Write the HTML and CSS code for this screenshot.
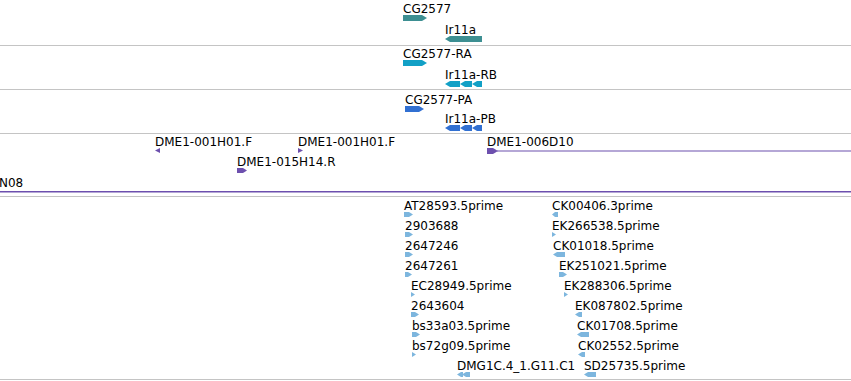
FILE: index.html
```html
<!DOCTYPE html>
<html lang="en">
<head>
  <meta charset="UTF-8" />
  <title>Track view</title>
  <link rel="stylesheet" href="styles.css">
</head>
<body>
  <div class="tracks">

    <!-- gene models -->
    <div class="track t-genes">
      <div class="feat" style="left:403px;top:2px">
        <div class="lbl">CG2577</div>
        <svg class="glyph" width="24" height="6"><polygon points="0,0 19,0 24,3 19,6 0,6"/></svg>
      </div>
      <div class="feat" style="left:445px;top:23px">
        <div class="lbl">Ir11a</div>
        <svg class="glyph" width="37" height="6"><polygon points="0,3 5,0 37,0 37,6 5,6"/></svg>
      </div>
    </div>

    <!-- transcripts -->
    <div class="track t-mrna">
      <div class="feat" style="left:403px;top:1px">
        <div class="lbl">CG2577-RA</div>
        <svg class="glyph" width="24" height="6"><polygon points="0,0 19,0 24,3 19,6 0,6"/></svg>
      </div>
      <div class="feat" style="left:445px;top:22px">
        <div class="lbl">Ir11a-RB</div>
        <svg class="glyph" width="37" height="6">
          <polygon points="0,3 5,0 15,0 15,6 5,6"/>
          <polygon points="15,3 20,0 27,0 27,6 20,6"/>
          <polygon points="27,3 32,0 37,0 37,6 32,6"/>
        </svg>
      </div>
    </div>

    <!-- polypeptides -->
    <div class="track t-pep">
      <div class="feat" style="left:405px;top:3px">
        <div class="lbl">CG2577-PA</div>
        <svg class="glyph" width="19" height="6"><polygon points="0,0 14,0 19,3 14,6 0,6"/></svg>
      </div>
      <div class="feat" style="left:445px;top:22px">
        <div class="lbl">Ir11a-PB</div>
        <svg class="glyph" width="37" height="6">
          <polygon points="0,3 5,0 15,0 15,6 5,6"/>
          <polygon points="15,3 20,0 27,0 27,6 20,6"/>
          <polygon points="27,3 32,0 37,0 37,6 32,6"/>
        </svg>
      </div>
    </div>

    <!-- BAC ends -->
    <div class="track t-bac">
      <div class="feat" style="left:155px;top:1px">
        <div class="lbl">DME1-001H01.F</div>
        <svg class="glyph" width="5" height="5"><polygon points="0,2.5 5,0 5,5"/></svg>
      </div>
      <div class="feat" style="left:298px;top:1px">
        <div class="lbl">DME1-001H01.F</div>
        <svg class="glyph" width="5" height="5"><polygon points="0,0 5,2.5 0,5"/></svg>
      </div>
      <div class="feat" style="left:487px;top:1px">
        <div class="lbl">DME1-006D10</div>
        <svg class="glyph" width="364" height="6">
          <polygon points="0,0 6,0 11,3 6,6 0,6"/>
          <rect x="10" y="2.5" width="354" height="1"/>
        </svg>
      </div>
      <div class="feat" style="left:237px;top:21px">
        <div class="lbl">DME1-015H14.R</div>
        <svg class="glyph" width="10" height="5"><polygon points="0,0 6,0 10,2.5 6,5 0,5"/></svg>
      </div>
      <div class="feat" style="left:-1px;top:42px">
        <div class="lbl">N08</div>
        <svg class="glyph" width="852" height="6"><rect x="0" y="2" width="852" height="1.5"/></svg>
      </div>
    </div>

    <!-- ESTs -->
    <div class="track t-est">
      <div class="feat" style="left:404px;top:2px">
        <div class="lbl">AT28593.5prime</div>
        <svg class="glyph" width="9" height="5"><polygon points="0,0 5,0 9,2.5 5,5 0,5"/></svg>
      </div>
      <div class="feat" style="left:552px;top:2px">
        <div class="lbl">CK00406.3prime</div>
        <svg class="glyph" width="6" height="5"><polygon points="0,2.5 3,0 6,0 6,5 3,5"/></svg>
      </div>

      <div class="feat" style="left:405px;top:22px">
        <div class="lbl">2903688</div>
        <svg class="glyph" width="8" height="5"><polygon points="0,0 4,0 8,2.5 4,5 0,5"/></svg>
      </div>
      <div class="feat" style="left:552px;top:22px">
        <div class="lbl">EK266538.5prime</div>
        <svg class="glyph" width="4" height="5"><polygon points="0,0 4,2.5 0,5"/></svg>
      </div>

      <div class="feat" style="left:405px;top:42px">
        <div class="lbl">2647246</div>
        <svg class="glyph" width="8" height="5"><polygon points="0,0 4,0 8,2.5 4,5 0,5"/></svg>
      </div>
      <div class="feat" style="left:553px;top:42px">
        <div class="lbl">CK01018.5prime</div>
        <svg class="glyph" width="12" height="5"><polygon points="0,2.5 4,0 12,0 12,5 4,5"/></svg>
      </div>

      <div class="feat" style="left:405px;top:62px">
        <div class="lbl">2647261</div>
        <svg class="glyph" width="7" height="5"><polygon points="0,0 3,0 7,2.5 3,5 0,5"/></svg>
      </div>
      <div class="feat" style="left:559px;top:62px">
        <div class="lbl">EK251021.5prime</div>
        <svg class="glyph" width="8" height="5"><polygon points="0,0 4,0 8,2.5 4,5 0,5"/></svg>
      </div>

      <div class="feat" style="left:411px;top:82px">
        <div class="lbl">EC28949.5prime</div>
        <svg class="glyph" width="4" height="5"><polygon points="0,0 4,2.5 0,5"/></svg>
      </div>
      <div class="feat" style="left:564px;top:82px">
        <div class="lbl">EK288306.5prime</div>
        <svg class="glyph" width="4" height="5"><polygon points="0,0 4,2.5 0,5"/></svg>
      </div>

      <div class="feat" style="left:411px;top:102px">
        <div class="lbl">2643604</div>
        <svg class="glyph" width="8" height="5"><polygon points="0,0 4,0 8,2.5 4,5 0,5"/></svg>
      </div>
      <div class="feat" style="left:575px;top:102px">
        <div class="lbl">EK087802.5prime</div>
        <svg class="glyph" width="7" height="5"><polygon points="0,2.5 4,0 7,0 7,5 4,5"/></svg>
      </div>

      <div class="feat" style="left:412px;top:122px">
        <div class="lbl">bs33a03.5prime</div>
        <svg class="glyph" width="8" height="5"><polygon points="0,0 4,0 8,2.5 4,5 0,5"/></svg>
      </div>
      <div class="feat" style="left:577px;top:122px">
        <div class="lbl">CK01708.5prime</div>
        <svg class="glyph" width="12" height="5"><polygon points="0,2.5 4,0 12,0 12,5 4,5"/></svg>
      </div>

      <div class="feat" style="left:412px;top:142px">
        <div class="lbl">bs72g09.5prime</div>
        <svg class="glyph" width="4" height="5"><polygon points="0,0 4,2.5 0,5"/></svg>
      </div>
      <div class="feat" style="left:578px;top:142px">
        <div class="lbl">CK02552.5prime</div>
        <svg class="glyph" width="7" height="5"><polygon points="0,2.5 4,0 7,0 7,5 4,5"/></svg>
      </div>

      <div class="feat" style="left:457px;top:162px">
        <div class="lbl">DMG1C.4_1.G11.C1</div>
        <svg class="glyph" width="13" height="5">
          <polygon points="0,2.5 4,0 6,0 6,5 4,5"/>
          <polygon points="5,2.5 9,0 13,0 13,5 9,5"/>
        </svg>
      </div>
      <div class="feat" style="left:584px;top:162px">
        <div class="lbl">SD25735.5prime</div>
        <svg class="glyph" width="12" height="5"><polygon points="0,2.5 4,0 12,0 12,5 4,5"/></svg>
      </div>
    </div>

  </div>
</body>
</html>
```

FILE: styles.css
```css
body {
  margin: 0;
  background: #fff;
  font-family: "DejaVu Sans", sans-serif;
  overflow: hidden;
}

.tracks {
  width: 851px;
}

.track {
  position: relative;
  overflow: hidden;
  border-bottom: 1px solid #c4c4c4;
}

.t-genes {
  height: 45px;
}

.t-mrna,
.t-pep {
  height: 43px;
}

.t-bac {
  height: 62px;
}

.t-est {
  height: 182px;
}

/* a feature: label over its glyph */
.feat {
  position: absolute;
}

.lbl {
  font-size: 12px;
  line-height: 14px;
  color: #000;
  white-space: nowrap;
}

.glyph {
  display: block;
  margin-top: -1px;
  fill: currentColor;
}

.t-genes .glyph {
  color: #3d8f92;
}

.t-mrna .glyph {
  color: #12a0c6;
}

.t-pep .glyph {
  color: #3170d2;
}

.t-bac .glyph {
  color: #6d50ae;
}

.t-est .glyph {
  color: #7db6de;
}
```
